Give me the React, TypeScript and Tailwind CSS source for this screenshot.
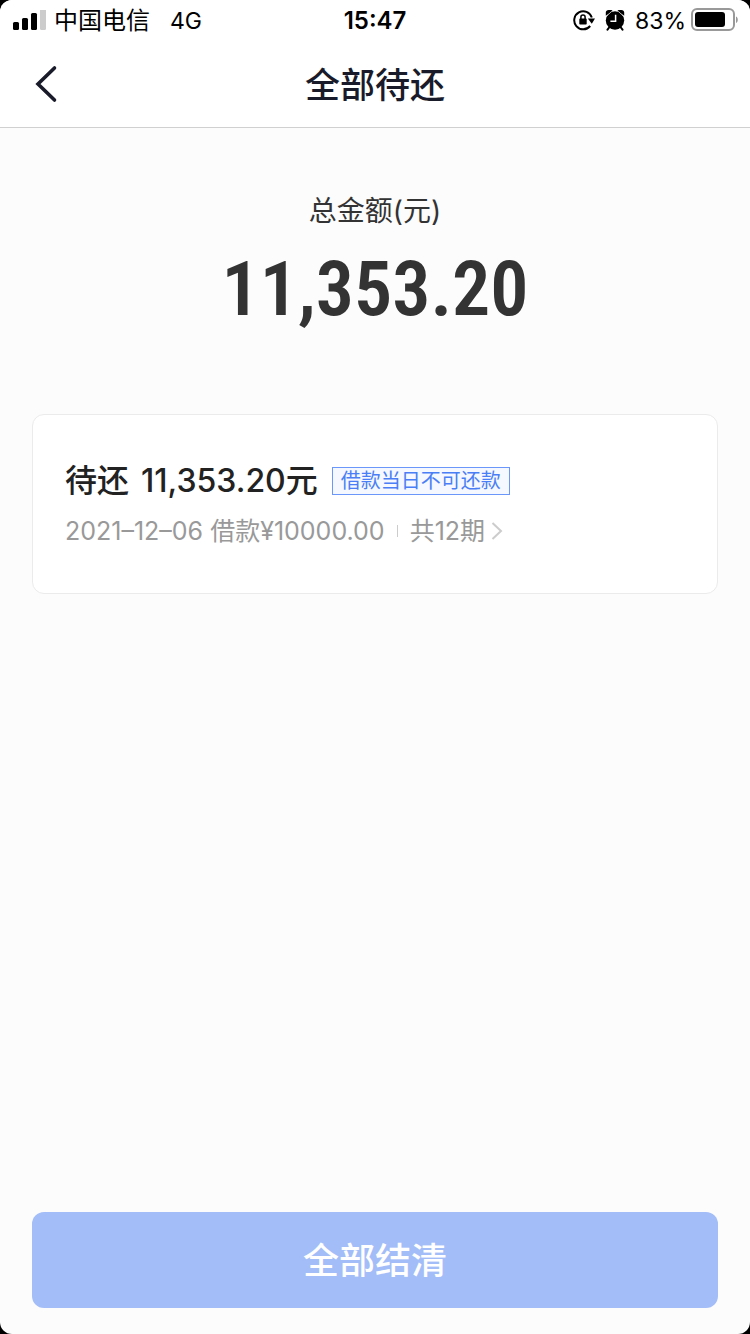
const cjk = 'font-[Inter,"Noto_Sans_CJK_SC",sans-serif]';

function StatusBar() {
  return (
    <div className="grid h-10 grid-cols-[1fr_auto_1fr] items-center px-3 pt-px text-2xl leading-10 text-black">
      <div className="flex items-center">
        <svg className="mb-0.5" width="34" height="20" viewBox="0 0 34 20" aria-hidden="true">
          <rect x="1" y="12" width="6" height="8" rx="1.5" />
          <rect x="10" y="8" width="6" height="12" rx="1.5" />
          <rect x="19" y="3" width="6" height="17" rx="1.5" />
          <rect x="28" y="-1" width="6" height="21" rx="1.5" fill="#ccc" />
        </svg>
        <span className="ml-2">中国电信</span>
        <span className="ml-5 text-[23px]">4G</span>
      </div>
      <span className="font-semibold">15:47</span>
      <div className="flex items-center justify-end">
        <svg className="mb-0.5" width="22" height="22" viewBox="0 0 22 22" aria-hidden="true">
          <path d="M17.2 17A9 9 0 1 1 18.8 8.5" fill="none" stroke="#000" strokeWidth="2" />
          <path d="M14.8 9.6h7.2l-3.2 5.2z" />
          <rect x="6.3" y="9.6" width="7.4" height="6" rx=".8" />
          <path d="M7.9 10V8a2.1 2.1 0 0 1 4.2 0v2" fill="none" stroke="#000" strokeWidth="1.5" />
        </svg>
        <svg className="mb-0.5 ml-2.5" width="20" height="22" viewBox="0 0 20 22" aria-hidden="true">
          <circle cx="10" cy="11.5" r="9.2" />
          <path d="M.8 6.8V3.600C.8 2 2 1 3.600 1H6.600L7.600 2zM19.200 6.800V3.600C19.200 2 18 1 16.400 1H13.400L12.400 2z" />
          <path d="M1.600 7.200L6.800 2.200M18.400 7.200L13.200 2.200" stroke="#fff" strokeWidth=".6" />
          <path d="M4.500 18l-2 2.600M15.500 18l2 2.600" stroke="#000" strokeWidth="2" strokeLinecap="round" />
          <path d="M10.600 5.800v6.400H5.400" fill="none" stroke="#fff" strokeWidth="1.500" />
        </svg>
        <span className="ml-2.5 text-[23px]">83%</span>
        <svg className="mb-0.5 ml-1" width="48" height="24" viewBox="0 0 48 24" aria-hidden="true">
          <rect x="2" y="1" width="42" height="21" rx="5" fill="none" stroke="#999" strokeWidth="2" />
          <rect x="5" y="4" width="30" height="15" rx="3" />
          <path d="M46 8.500c2.400 1 2.400 5.500 0 6.500z" fill="#999" />
        </svg>
      </div>
    </div>
  );
}

export default function App() {
  return (
    <div className="min-h-screen bg-black">
      <div className={`flex min-h-screen flex-col overflow-hidden rounded-xl bg-[#fcfcfc] ${cjk}`}>
        <header className="border-b border-[#d0d0d0] bg-white">
          <StatusBar />
          <div className="grid h-[87px] grid-cols-[1fr_auto_1fr] items-center px-8">
            <button type="button" aria-label="返回" className="w-8">
              <svg width="28" height="40" viewBox="0 0 28 40" fill="none" aria-hidden="true">
                <path d="M22.500 4L6 20l16.500 16" stroke="#191b2a" strokeWidth="3.600" strokeLinecap="round" />
              </svg>
            </button>
            <h1 className="pt-1 text-[35px] font-medium text-[#191b2a]">全部待还</h1>
          </div>
        </header>

        <main className="flex flex-1 flex-col px-8 text-[#333]">
          <section className="pt-[61px] text-center">
            <p className="text-[28px] leading-11">总金额(元)</p>
            <p className="font-['Roboto_Condensed','Liberation_Sans_Narrow',Roboto,sans-serif] text-[76px] leading-28 font-semibold">
              11,353.20
            </p>
          </section>

          <section className="mt-[69px] rounded-xl border border-[#ebebeb] bg-white px-8 pt-[42px] pb-[38px]">
            <div className="flex items-center">
              <h2 className="flex gap-3 text-[32px] leading-12 font-medium text-[#222]">
                <span>待还</span>
                <span>11,353.20元</span>
              </h2>
              <span className="ml-3.5 border border-[#6b96fa] bg-[#f5f8ff] px-2 text-xl leading-[26px] text-[#4a7ef6]">
                借款当日不可还款
              </span>
            </div>
            <a href="#detail" className="flex items-center pt-0.5 text-[25px] leading-12 text-[#999]">
              <span>2021–12–06 借款¥10000.00</span>
              <span className="mx-3 h-3 w-px bg-[#ccc]" />
              <span>共12期</span>
              <svg className="ml-1.5" width="12" height="20" viewBox="0 0 12 20" fill="none" aria-hidden="true">
                <path d="M1.500 2l8.500 8-8.500 8" stroke="#ccc" strokeWidth="2" />
              </svg>
            </a>
          </section>

          <button
            type="button"
            className="mt-auto mb-[26px] h-24 w-full rounded-xl bg-[#a3bdf8] pt-0.5 text-4xl font-medium text-white"
          >
            全部结清
          </button>
        </main>
      </div>
    </div>
  );
}
